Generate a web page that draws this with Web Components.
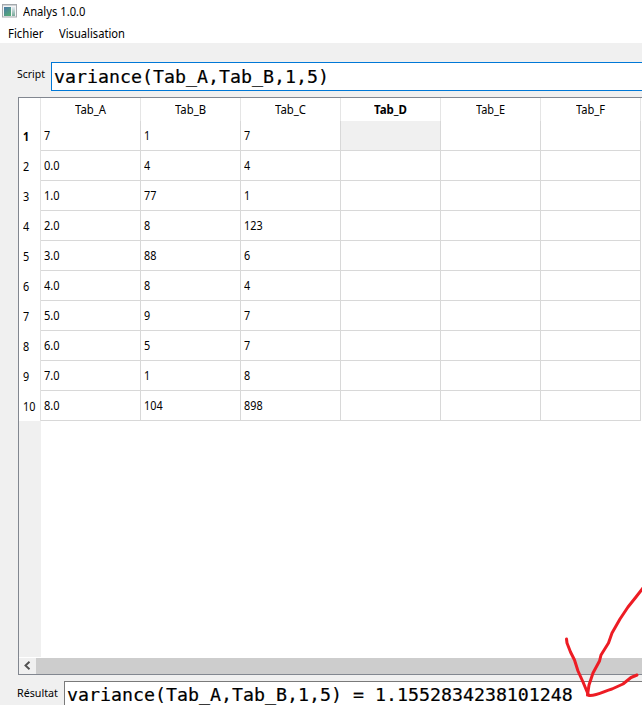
<!DOCTYPE html>
<html lang="fr">
<head>
<meta charset="utf-8">
<title>Analys 1.0.0</title>
<style>
html,body{margin:0;height:705px;overflow:hidden;background:#f0f0f0}
body{font:12px/16px "Noto Sans","Open Sans",sans-serif;color:#000}
</style>
</head>
<body>
<analys-window></analys-window>
<script>
// A line of text; "fit" gives the width in pixels that it takes up.
class FitText extends HTMLElement {
  connectedCallback() {
    const root = this.attachShadow({mode: 'open'});
    root.innerHTML = `<style>
      :host{display:block;white-space:pre}
      span{display:inline-block;transform-origin:0 50%}
    </style><span><slot></slot></span>`;
    const fit = +this.getAttribute('fit');
    const span = root.querySelector('span');
    if (fit) {
      this.style.width = fit + 'px';
      span.style.transform = `scaleX(${fit / span.getBoundingClientRect().width})`;
    }
  }
}
customElements.define('fit-text', FitText);

class TitleBar extends HTMLElement {
  connectedCallback() {
    this.attachShadow({mode: 'open'}).innerHTML = `<style>
      :host{display:flex;flex:none;height:24px;background:#fff;padding:0 0 0 2px;box-sizing:border-box}
      svg{display:block;margin:4px 6px 0 0;flex:none}
      fit-text{margin-top:4px}
    </style>
    <svg width="15" height="14" viewBox="0 0 15 14">
      <defs>
        <linearGradient id="g" x1="0" y1="0" x2=".6" y2="1"><stop stop-color="#4a78a8"/><stop offset="1" stop-color="#54a878"/></linearGradient>
        <linearGradient id="h" x1="0" y1="0" x2="0" y2="1"><stop stop-color="#e4ebf2"/><stop offset="1" stop-color="#78a898"/></linearGradient>
      </defs>
      <rect x=".5" y=".5" width="14" height="12.5" fill="#f5f5f5" stroke="#a5a9ad"/>
      <rect x="1" y="1" width="13" height="1" fill="#d0d3d6"/>
      <rect x="2" y="3" width="7" height="9" fill="url(#g)"/>
      <rect x="10" y="3" width="3" height="9" fill="url(#h)"/>
    </svg><fit-text fit="62.5"><slot></slot></fit-text>`;
  }
}
customElements.define('title-bar', TitleBar);

class MenuBar extends HTMLElement {
  connectedCallback() {
    this.attachShadow({mode: 'open'}).innerHTML = `<style>
      :host{display:flex;flex:none;gap:15.5px;height:19px;background:#fff;padding:2px 8px 0;box-sizing:border-box}
    </style><fit-text fit="35.5">Fichier</fit-text><fit-text fit="66">Visualisation</fit-text>`;
  }
}
customElements.define('menu-bar', MenuBar);

class ScriptField extends HTMLElement {
  connectedCallback() {
    this.attachShadow({mode: 'open'}).innerHTML = `<style>
      :host{display:flex;padding-left:17px;height:29px;flex:none}
      .label{margin-top:4px;flex:none;font-size:11.5px}
      .box{flex:1;margin-left:6px;height:29px;box-sizing:border-box;background:#fff;
        border:1px solid #7a7a7a;border-right:0;padding-left:2px;white-space:pre;
        font:18.27px/25px "DejaVu Sans Mono",monospace;-webkit-text-stroke:.2px #000}
      :host([active]) .box{border-color:#0078d7;line-height:27px}
    </style><fit-text class="label" fit="${this.getAttribute('fit')}">${this.getAttribute('label')}</fit-text>
    <div class="box"><slot></slot></div>`;
  }
}
customElements.define('script-field', ScriptField);

class DataGrid extends HTMLElement {
  connectedCallback() {
    const rows = [['7','1','7'],['0.0','4','4'],['1.0','77','1'],['2.0','8','123'],['3.0','88','6'],
      ['4.0','8','4'],['5.0','9','7'],['6.0','5','7'],['7.0','1','8'],['8.0','104','898']];
    const width = s => [...s].reduce((n, c) => n + (c === '.' ? 3.2 : 6.2), 0);
    const text = s => s ? `<fit-text fit="${width(s)}">${s}</fit-text>` : '';
    const heads = ['A','B','C','D','E','F'].map(c =>
      `<div class="head${c === 'D' ? ' on' : ''}"><fit-text fit="${c === 'D' ? 33 : c < 'D' ? 31 : 29}">Tab_${c}</fit-text></div>`).join('');
    const body = rows.map((r, i) => `<div class="row${i ? '' : ' first'}"><div class="num">${text(String(i + 1))}</div>${
      [0,1,2,3,4,5].map(c => `<div class="cell${!i && c === 3 ? ' sel' : ''}">${text(r[c])}</div>`).join('')}</div>`).join('');
    this.attachShadow({mode: 'open'}).innerHTML = `<style>
      :host{display:flex;flex-direction:column;height:578px;box-sizing:border-box;margin-left:18px;
        background:#fff;border:1px solid #828790;border-right:0;overflow:hidden;flex:none}
      .heads,.row{display:grid;grid-template-columns:22px repeat(6,100px);flex:none}
      .heads{height:23px}
      .corner,.head{border-right:1px solid #e5e5e5}
      .head{display:flex;justify-content:center;padding-top:4px;box-sizing:border-box;height:23px}
      .on{font-weight:700}
      .row{height:30px}
      .num{border-right:1px solid #e0e0e0;padding:8px 0 0 4px}
      .cell{border:solid #d8d8d8;border-width:0 1px 1px 0;padding:7px 0 0 3px}
      .sel{background:#f0f0f0}
      .first .num{font-weight:700}
      .blank{width:22px;flex:1;background:#f0f0f0}
      .scroll{height:16px;margin-top:1px;display:flex;background:#cdcdcd;flex:none}
      .scroll svg{background:#f0f0f0;flex:none}
    </style><div class="heads"><div class="corner"></div>${heads}</div>${body}
    <div class="blank"></div>
    <div class="scroll"><svg width="17" height="16"><path d="M10.5 3.8 6.5 7.5l4 3.7" fill="none" stroke="#505050" stroke-width="1.9"/></svg></div>`;
  }
}
customElements.define('data-grid', DataGrid);

// Hand-drawn red arrow that lies over the window.
class RedArrow extends HTMLElement {
  connectedCallback() {
    this.attachShadow({mode: 'open'}).innerHTML = `<style>
      :host{position:absolute;left:540px;top:570px;width:102px;height:135px;pointer-events:none}
      svg{display:block}
    </style><svg width="102" height="135" fill="none" stroke="#ed1c24" stroke-width="3" stroke-linecap="round" stroke-linejoin="round">
      <path d="M26.5 69 27 73 30.5 82 34.5 90 38 101 43 112 48 124 49 125.5C58 126 64 121 72 119L83 114 91 107.5 97 105"/>
      <path d="M103 18 96 27 88 37 80 49 72 63 68.5 73 61 85 59.5 91 53 103 49 115 47.5 125"/>
    </svg>`;
  }
}
customElements.define('red-arrow', RedArrow);

class AnalysWindow extends HTMLElement {
  connectedCallback() {
    this.attachShadow({mode: 'open'}).innerHTML = `<style>
      :host{display:flex;flex-direction:column;width:642px;height:705px;overflow:hidden;position:relative;background:#f0f0f0}
      .script{margin:19px 0 6px}
      .result{margin-top:6px}
    </style>
    <title-bar>Analys 1.0.0</title-bar><menu-bar></menu-bar>
    <script-field class="script" active label="Script" fit="28">variance(Tab_A,Tab_B,1,5)</script-field>
    <data-grid></data-grid>
    <script-field class="result" label="Résultat" fit="41">variance(Tab_A,Tab_B,1,5) = 1.1552834238101248</script-field>
    <red-arrow></red-arrow>`;
  }
}
customElements.define('analys-window', AnalysWindow);
</script>
</body>
</html>
